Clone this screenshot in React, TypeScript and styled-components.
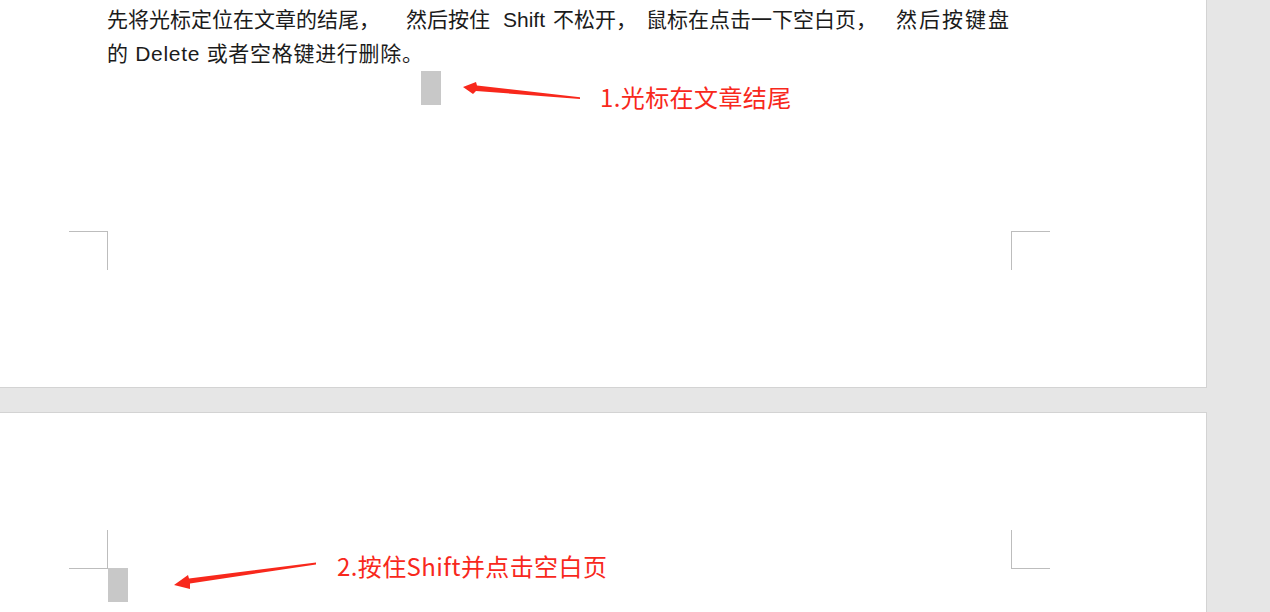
import React from "react";
import styled, { createGlobalStyle } from "styled-components";

const Global = createGlobalStyle`
  html, body { margin: 0; padding: 0; background: #e6e6e6; }
  #root { width: 1270px; height: 612px; }
`;

const Viewport = styled.div`
  position: relative;
  width: 1270px;
  height: 612px;
  overflow: hidden;
  background: #e6e6e6;
  display: flex;
  flex-direction: column;
  gap: 24px;
`;

const Page = styled.section<{ $top: number; $bottom: number; $first?: boolean }>`
  flex: none;
  width: 1207px;
  box-sizing: border-box;
  background: #ffffff;
  border-right: 1px solid #d3d3d3;
  border-bottom: ${(p) => (p.$first ? "1px solid #d3d3d3" : "none")};
  border-top: ${(p) => (p.$first ? "none" : "1px solid #d3d3d3")};
  padding: ${(p) => p.$top}px 0 ${(p) => p.$bottom}px 107px;
`;

const TextArea = styled.div<{ $height: number }>`
  position: relative;
  width: 904px;
  height: ${(p) => p.$height}px;
  font-family: "Liberation Sans", "Noto Sans CJK SC", sans-serif;
  font-size: 21px;
  line-height: 34px;
  color: #1b1b1b;
`;

const Line = styled.div<{ $ls?: number; $ws?: number }>`
  white-space: nowrap;
  letter-spacing: ${(p) => p.$ls ?? 0}px;
  word-spacing: ${(p) => p.$ws ?? 0}px;
`;

const Run = styled.span<{ $ls?: number; $after?: number }>`
  display: inline-block;
  letter-spacing: ${(p) => p.$ls ?? 0}px;
  margin-right: ${(p) => p.$after ?? 0}px;
`;

const Caret = styled.div<{ $offset: number }>`
  width: 20px;
  height: 34px;
  margin-left: ${(p) => p.$offset}px;
  background: #c8c8c8;
`;

const Corner = styled.div<{ $side: "left" | "right"; $edge: "top" | "bottom" }>`
  position: absolute;
  width: 38px;
  height: 38px;
  ${(p) => (p.$edge === "bottom" ? "top: 100%;" : "bottom: 100%; margin-bottom: -1px;")}
  ${(p) =>
    p.$side === "left"
      ? "right: 100%; margin-right: -1px; border-right: 1px solid #bdbdbd;"
      : "left: 100%; border-left: 1px solid #bdbdbd;"}
  ${(p) => (p.$edge === "bottom" ? "border-top: 1px solid #bdbdbd;" : "border-bottom: 1px solid #bdbdbd;")}
`;

const Overlay = styled.svg`
  position: absolute;
  inset: 0;
  pointer-events: none;
`;

const Label = styled.span<{ $x: number; $y: number }>`
  position: absolute;
  left: ${(p) => p.$x}px;
  top: ${(p) => p.$y}px;
  font-family: "Noto Sans CJK SC", sans-serif;
  font-size: 24px;
  line-height: 24px;
  letter-spacing: 0.4px;
  color: #f8281c;
  white-space: nowrap;
`;

const RED = "#f8281c";

export default function App() {
  return (
    <>
      <Global />
      <Viewport>
        <Page $first $top={3} $bottom={156}>
          <TextArea $height={228}>
            <Line>
              <Run $after={26}>先将光标定位在文章的结尾，</Run>
              <Run $after={13}>然后按住</Run>
              <Run $after={8}>Shift</Run>
              <Run $after={9}>不松开，</Run>
              <Run $after={19}>鼠标在点击一下空白页，</Run>
              <Run $ls={2}>然后按键盘</Run>
            </Line>
            <Line $ls={0.7}>的 Delete 或者空格键进行删除。</Line>
            <Caret $offset={314} />
            <Corner $side="left" $edge="bottom" />
            <Corner $side="right" $edge="bottom" />
          </TextArea>
        </Page>
        <Page $top={155} $bottom={0}>
          <TextArea $height={44}>
            <Caret $offset={1} />
            <Corner $side="left" $edge="top" />
            <Corner $side="right" $edge="top" />
          </TextArea>
        </Page>
        <Overlay width="1270" height="612" viewBox="0 0 1270 612">
          <polygon
            fill={RED}
            points="463,87 476,82 477,85.5 580,97.3 580,99 476,91 473,94"
          />
          <polygon
            fill={RED}
            points="174,585 188,575 189,578.5 316,562.5 316,564.5 190,583.5 190,589"
          />
        </Overlay>
        <Label $x={600} $y={85}>1.光标在文章结尾</Label>
        <Label $x={337} $y={554}>2.按住Shift并点击空白页</Label>
      </Viewport>
    </>
  );
}
